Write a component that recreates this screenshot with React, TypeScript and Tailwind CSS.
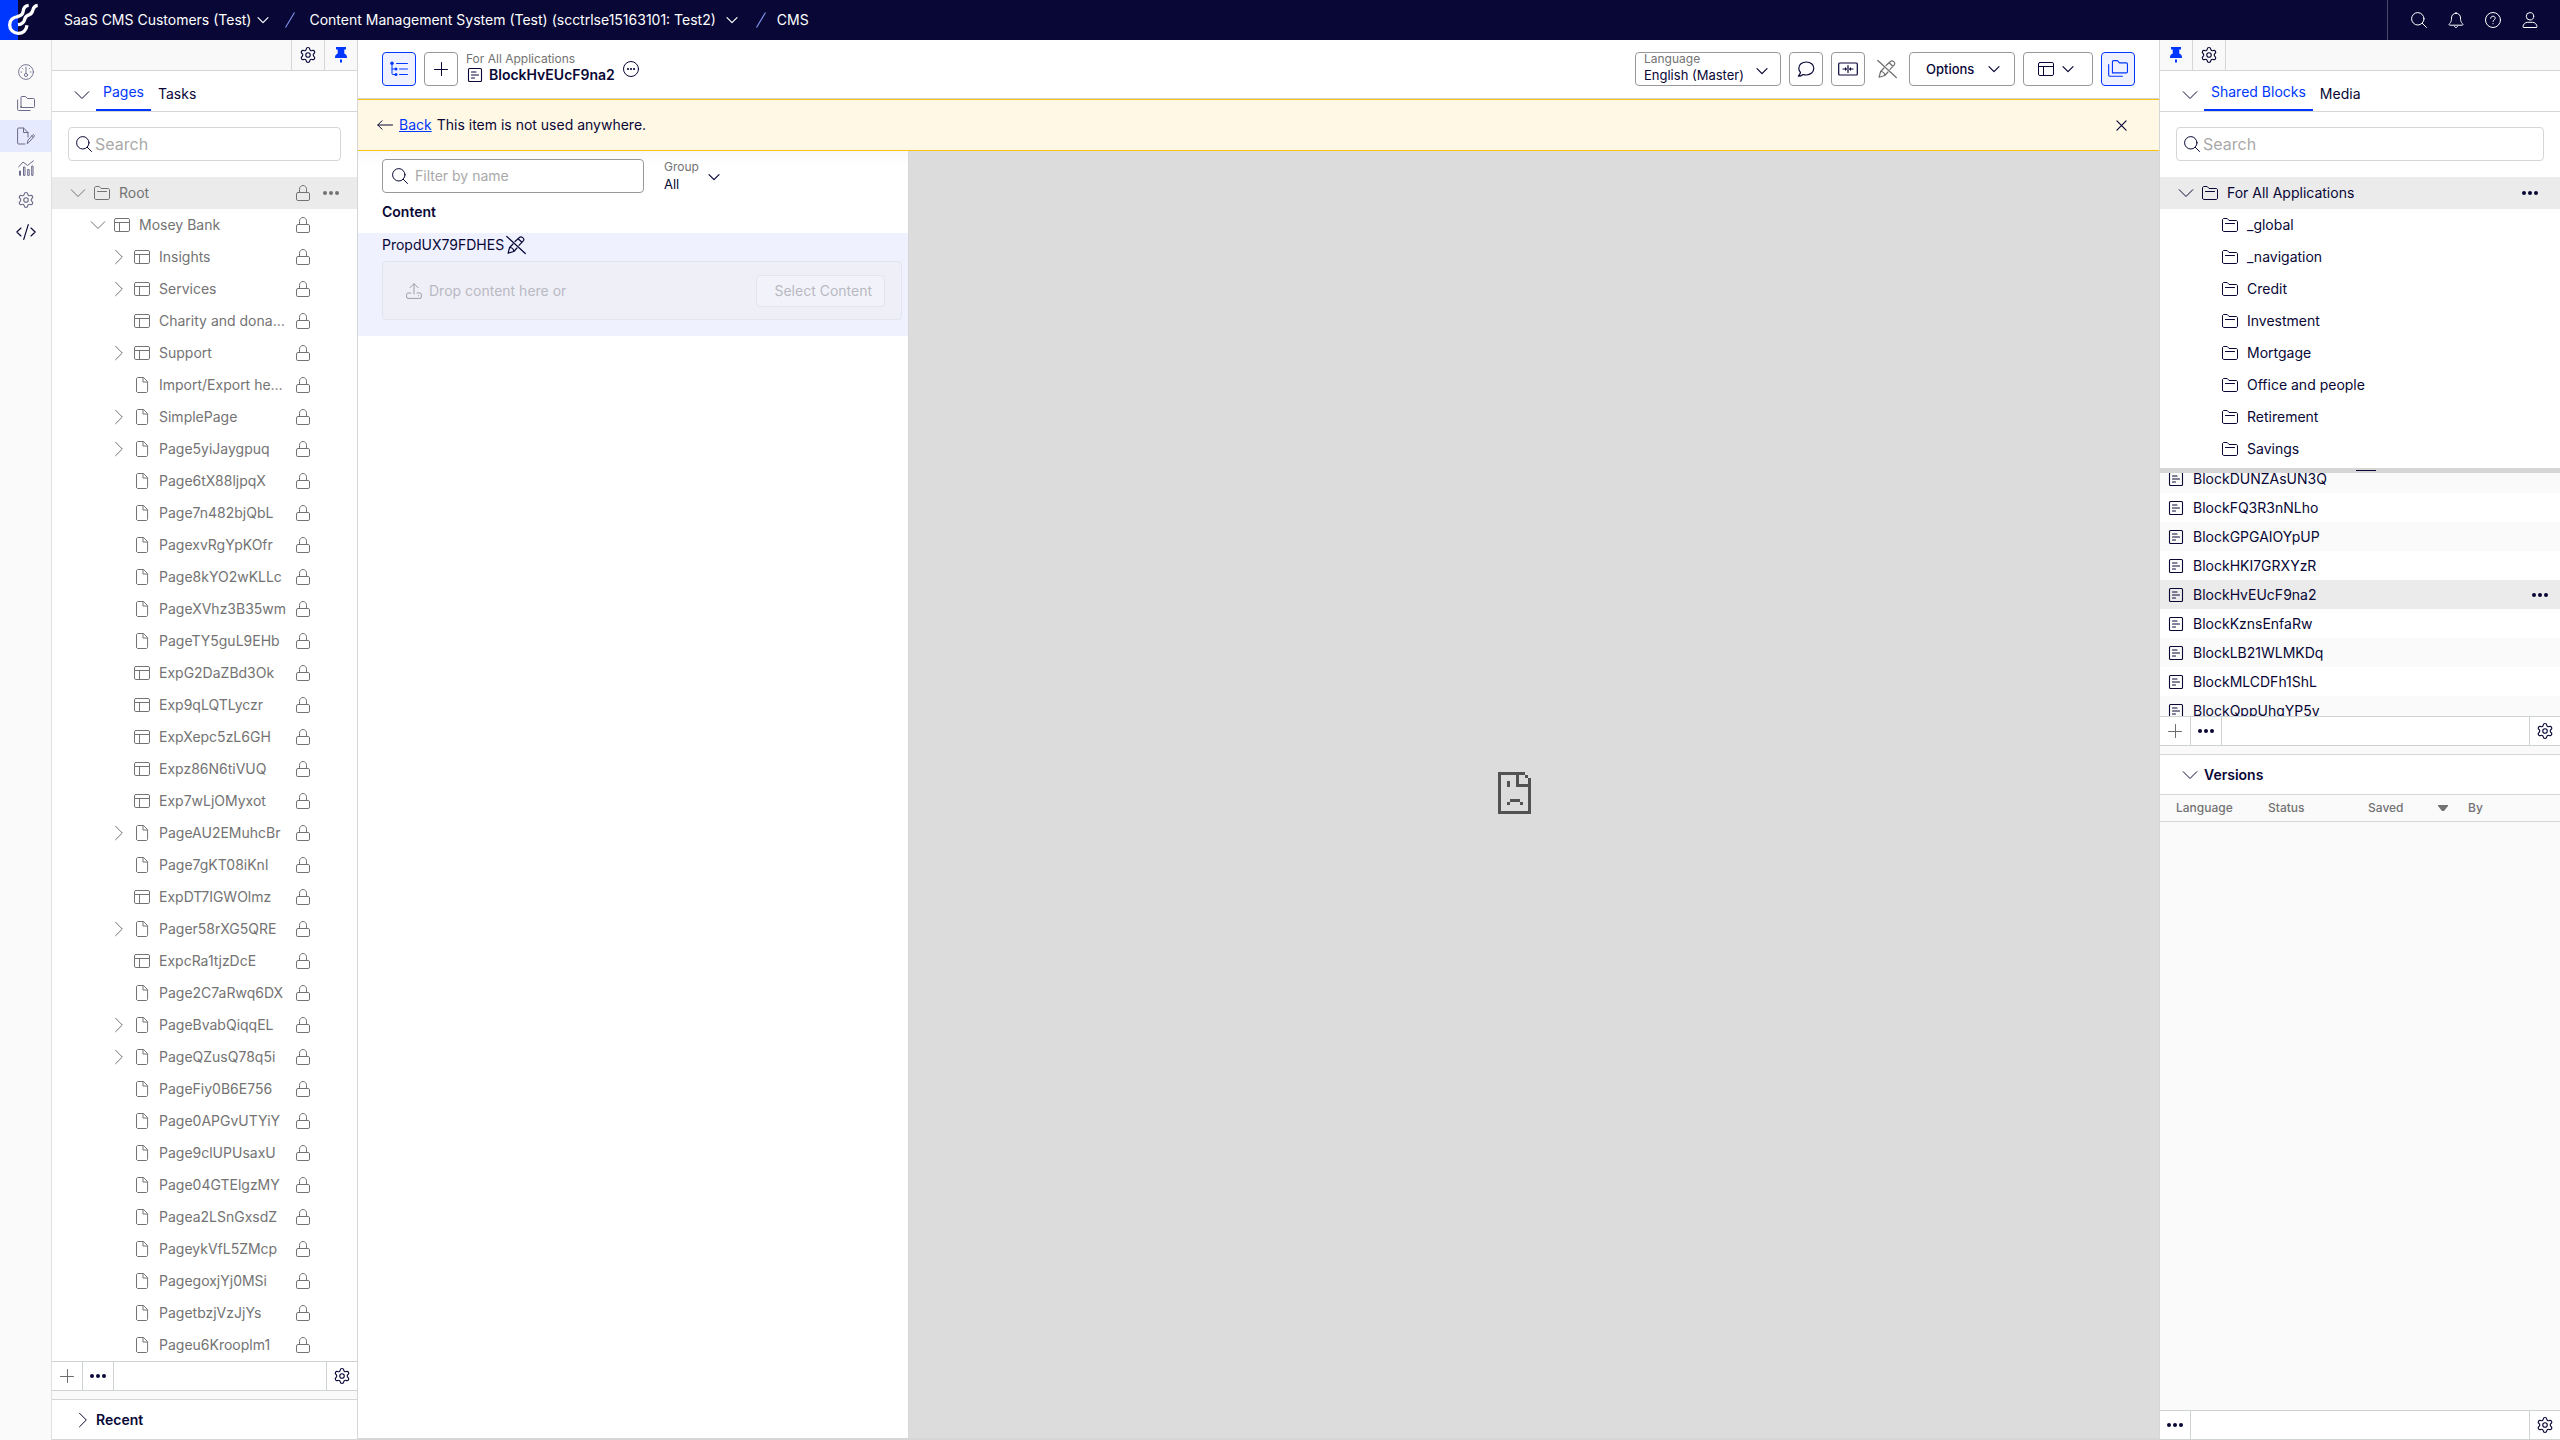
import { useState } from "react";
import type { ReactNode } from "react";
import { Settings } from "lucide-react";

/* ---------- icons ---------- */

type IconProps = { className?: string };

function Svg({ className = "size-4", box = 16, width = 1, children }: IconProps & { box?: number; width?: number; children: ReactNode }) {
  return (
    <svg
      viewBox={`0 0 ${box} ${box}`}
      className={`shrink-0 ${className}`}
      fill="none"
      stroke="currentColor"
      strokeWidth={width}
      strokeLinecap="round"
      strokeLinejoin="round"
      aria-hidden="true"
    >
      {children}
    </svg>
  );
}

const ChevronDown = ({ className = "size-4" }: IconProps) => (
  <Svg className={className}>
    <path d="M1.200 4.700 8 11.500 14.800 4.700" />
  </Svg>
);
const ChevronRight = ({ className = "size-4" }: IconProps) => (
  <Svg className={className}>
    <path d="M5.500 1.200 12.300 8 5.500 14.800" />
  </Svg>
);
const SmallChevron = ({ className = "size-3" }: IconProps) => (
  <Svg className={className} box={12} width={1.2}>
    <path d="M1 3.6 6 8.6 11 3.6" />
  </Svg>
);
const FolderIcon = ({ className }: IconProps) => (
  <Svg className={className}>
    <path d="M.5 13V3c0-.8.6-1.500 1.500-1.500h3.200L7 3.500h7c.9 0 1.500.6 1.500 1.400V13c0 .9-.6 1.500-1.500 1.500H2c-.9 0-1.500-.6-1.500-1.500ZM3.500 6.500h9" />
  </Svg>
);
const PageLayoutIcon = ({ className }: IconProps) => (
  <Svg className={className}>
    <rect x=".5" y="1.5" width="15" height="13" rx="1.4" />
    <path d="M.5 5.5h15M5.5 5.5v9" />
  </Svg>
);
const FileIcon = ({ className }: IconProps) => (
  <Svg className={className}>
    <path d="M2.5 14V2c0-.8.6-1.5 1.5-1.5h5.600l4 4.200V14c0 .9-.6 1.5-1.5 1.5H4c-.9 0-1.5-.6-1.5-1.5ZM9 .8V5h4.300" />
  </Svg>
);
const LockIcon = ({ className }: IconProps) => (
  <Svg className={className}>
    <rect x="1.5" y="7.5" width="13" height="8" rx="1.4" />
    <path d="M4.5 7.3V4.2C4.5 2 6 .5 8 .5s3.500 1.500 3.500 3.700v3.100" />
  </Svg>
);
const DotsIcon = ({ className }: IconProps) => (
  <Svg className={className}>
    <g fill="currentColor" stroke="none">
      <circle cx="2" cy="8" r="2" />
      <circle cx="8" cy="8" r="2" />
      <circle cx="14" cy="8" r="2" />
    </g>
  </Svg>
);
const SearchIcon = ({ className }: IconProps) => (
  <Svg className={className}>
    <circle cx="6.800" cy="6.800" r="6.200" />
    <path d="m11.300 11.300 4.200 4.200" />
  </Svg>
);
const BlockIcon = ({ className }: IconProps) => (
  <Svg className={className} width={1.1}>
    <rect x="1.500" y="1.500" width="13" height="13" rx="1" />
    <path d="M4.500 5h4.500M4.500 8h7M4.500 11h3" />
  </Svg>
);
const PlusIcon = ({ className }: IconProps) => (
  <Svg className={className}>
    <path d="M1.500 8.500h13M8.500 1.500v13" />
  </Svg>
);
const PinIcon = ({ className }: IconProps) => (
  <Svg className={className}>
    <path
      d="M3 0h10v2.500h-1.700v4c1.700.8 2.700 2 2.700 3.500v1H2v-1c0-1.500 1-2.700 2.700-3.500v-4H3ZM7 12.500h2V15l-1 1-1-1Z"
      fill="currentColor"
      stroke="none"
    />
  </Svg>
);
const GearIcon = ({ className = "size-[18px]" }: IconProps) => <Settings className={`shrink-0 ${className}`} strokeWidth={1.5} aria-hidden="true" />;

const GaugeIcon = ({ className }: IconProps) => (
  <Svg className={className} width={0.9}>
    <circle cx="8" cy="8" r="7.400" />
    <circle cx="8" cy="11" r="1.600" />
    <path d="M8 3.200v6M3 8h.8M12.200 8h.8M4.500 4.500l.5.5M11.500 4.500l-.5.5" />
  </Svg>
);
const FoldersIcon = ({ className = "size-[18px]" }: IconProps) => (
  <Svg className={className} box={18}>
    <path d="M4 12.500v-10c0-.6.4-1 1-1h3.500l1.800 2H16.500c.6 0 1 .4 1 1v7c0 .6-.4 1-1 1H5c-.6 0-1-.4-1-1Z" />
    <path d="M.6 5v9.500c0 .6.4 1 1 1H13" />
  </Svg>
);
const FilePenIcon = ({ className }: IconProps) => (
  <Svg className={className} box={18}>
    <path d="M11 10V5.500L6.500 1H1.500C1 1 .6 1.400.6 2v14c0 .6.4 1 .9 1H8" />
    <path d="M6.500 1v4.500H11M10.300 16.300l.8-3.300 4.800-5.300c.5-.5 2 .8 1.500 1.400l-4.900 5.600ZM14.600 8.900l1.600 1.500" />
  </Svg>
);
const ChartIcon = ({ className }: IconProps) => (
  <Svg className={className}>
    <path d="M.6 7 5 2l4.500 3.500L15.400.8M1.500 15v-4h1v4ZM5.500 15V7h1.500v8ZM9.700 15V9.500h1.500V15ZM13.700 15V6h1.300v9Z" />
  </Svg>
);
const CodeIcon = ({ className }: IconProps) => (
  <Svg className={className} box={20} width={1.1}>
    <path d="M5 6 .8 10 5 14M15 6l4.200 4L15 14M12.300 2.500l-4.600 15" />
  </Svg>
);
const BellIcon = ({ className }: IconProps) => (
  <Svg className={className}>
    <path d="M8 .5v1M8 1.300c-3 0-4.500 2.200-4.500 4.700 0 4-1.200 5-2.300 6-.4.500 0 1.200.6 1.200h12.400c.6 0 1-.7.6-1.200-1.100-1-2.300-2-2.300-6C12.500 3.500 11 1.300 8 1.300ZM6.500 14.500c.2.700.8 1 1.500 1s1.300-.3 1.500-1" />
  </Svg>
);
const HelpIcon = ({ className }: IconProps) => (
  <Svg className={className}>
    <circle cx="8" cy="8" r="7.500" />
    <path d="M5.700 6.300c0-1.300 1-2.100 2.300-2.100s2.300.8 2.300 2c0 1.700-2.300 1.600-2.300 3.300M8 11.600v.2" />
  </Svg>
);
const UserIcon = ({ className }: IconProps) => (
  <Svg className={className}>
    <circle cx="8" cy="4.300" r="3.700" />
    <path d="M1.500 15.500c-.3 0-.5-.2-.5-.6C1 12.500 3 10.300 5.500 10.300h5c2.500 0 4.500 2.200 4.500 4.600 0 .4-.2.6-.5.6Z" />
  </Svg>
);
const TreeIcon = ({ className }: IconProps) => (
  <Svg className={className} box={18}>
    <path d="M6.500 3.500h11M9.500 9h8M9.500 14.500h8M2 4.500V13.500c0 .6.400 1 1 1h2.500M2 9h3.500" />
    <g fill="currentColor" stroke="none">
      <circle cx="2" cy="3.300" r="1.700" />
      <circle cx="6" cy="9" r="1.500" />
      <circle cx="6" cy="14.500" r="1.500" />
    </g>
  </Svg>
);
const MoreCircleIcon = ({ className }: IconProps) => (
  <Svg className={className}>
    <circle cx="8" cy="8" r="7.500" />
    <g fill="currentColor" stroke="none">
      <circle cx="5" cy="8" r="1.100" />
      <circle cx="8" cy="8" r="1.100" />
      <circle cx="11" cy="8" r="1.100" />
    </g>
  </Svg>
);
const CommentIcon = ({ className }: IconProps) => (
  <Svg className={className} box={18} width={1.2}>
    <path d="M9.300 2C5 2 1.800 4.700 1.800 8.300c0 1.600.7 3 1.700 4.100-.3 1.600-1.200 2.900-2.200 3.800 1.900 0 3.700-.7 4.800-1.700 1 .3 2 .5 3.200.5 4.300 0 7.500-3 7.500-6.700S13.600 2 9.300 2Z" />
  </Svg>
);
const CompareIcon = ({ className }: IconProps) => (
  <Svg className={className} box={20} width={1.2}>
    <rect x=".700" y="4" width="18.600" height="12" rx="1" />
    <path d="M10 6.500v7M5 10h3M12 10h3" />
    <path d="M7 8l2 2-2 2ZM13 8l-2 2 2 2Z" fill="currentColor" stroke="none" />
  </Svg>
);
const NoEditIcon = ({ className }: IconProps) => (
  <Svg className={className} box={20} width={1.2}>
    <path d="M.8 1.500 19.300 18.500" />
    <path d="M9 6.500 13.700 2.300c1.500-1.500 5.200 1.300 3.800 3.300L13 10.300M12.300 4l3.700 3.300M7 9l-3.400 3.500-1.500 5.700 5.700-1.700L11 13M3.600 12.500c2.300 0 4 1.600 4.200 4" />
  </Svg>
);
const UploadIcon = ({ className }: IconProps) => (
  <Svg className={className}>
    <path d="M8 11V.8M4 4.700l4-4 4 4M5 10H2c-.8 0-1.400.6-1.400 1.400V14c0 .8.600 1.400 1.400 1.400h12c.8 0 1.400-.6 1.400-1.400v-2.600c0-.8-.600-1.400-1.400-1.400h-3M12.500 12.700h.2" />
  </Svg>
);
const ArrowLeftIcon = ({ className }: IconProps) => (
  <Svg className={className}>
    <path d="M15.500 8H.8M5 3.800.8 8 5 12.200" />
  </Svg>
);
const CloseIcon = ({ className }: IconProps) => (
  <Svg className={className} box={12} width={1.3}>
    <path d="m1 1 10 10M11 1 1 11" />
  </Svg>
);
const LogoIcon = ({ className }: IconProps) => (
  <svg viewBox="0 0 120 120" className={className} fill="none" stroke="white" strokeWidth="10" aria-hidden="true">
    <path d="M55 50C38 51 29 61 29 75c0 14 11 25 26 25 14 0 24-9 26-24" />
    <path d="M50 50c14-1 19-8 20-18 1-9 6-15 16-16" />
    <path d="M54 74c12-1 18-7 20-16 2-8 8-12 14-14 8-3 9-8 11-15 2-8 6-12 14-13" />
  </svg>
);
const SadPageIcon = ({ className }: IconProps) => (
  <svg viewBox="0 0 33 42" className={className} fill="#525252" shapeRendering="crispEdges" role="img" aria-label="Preview unavailable">
    <path d="M0 0h27v3H0zM0 0h3v42H0zM0 39h33v3H0zM30 6h3v36h-3zM27 3h3v3h-3zM18 0h3v15h-3zM18 12h15v3H18zM9 9h3v6H9zM12 27h10v3H12zM9 30h3v3H9zM22 30h3v3h-3z" />
  </svg>
);

/* ---------- data ---------- */

type Node = { name: string; kind: "folder" | "layout" | "file"; level?: number; open?: boolean; more?: boolean };

const f = (name: string, more = false): Node => ({ name, kind: "file", more });
const e = (name: string, more = false): Node => ({ name, kind: "layout", more });

const pages: Node[] = [
  { name: "Root", kind: "folder", level: 0, open: true },
  { name: "Mosey Bank", kind: "layout", level: 1, open: true },
  e("Insights", true),
  e("Services", true),
  e("Charity and dona…"),
  e("Support", true),
  f("Import/Export he…"),
  f("SimplePage", true),
  f("Page5yiJaygpuq", true),
  f("Page6tX88ljpqX"),
  f("Page7n482bjQbL"),
  f("PagexvRgYpKOfr"),
  f("Page8kYO2wKLLc"),
  f("PageXVhz3B35wm"),
  f("PageTY5guL9EHb"),
  e("ExpG2DaZBd3Ok"),
  e("Exp9qLQTLyczr"),
  e("ExpXepc5zL6GH"),
  e("Expz86N6tiVUQ"),
  e("Exp7wLjOMyxot"),
  f("PageAU2EMuhcBr", true),
  f("Page7gKT08iKnl"),
  e("ExpDT7IGWOlmz"),
  f("Pager58rXG5QRE", true),
  e("ExpcRa1tjzDcE"),
  f("Page2C7aRwq6DX"),
  f("PageBvabQiqqEL", true),
  f("PageQZusQ78q5i", true),
  f("PageFiy0B6E756"),
  f("Page0APGvUTYiY"),
  f("Page9clUPUsaxU"),
  f("Page04GTElgzMY"),
  f("Pagea2LSnGxsdZ"),
  f("PageykVfL5ZMcp"),
  f("PagegoxjYj0MSi"),
  f("PagetbzjVzJjYs"),
  f("Pageu6Krooplm1"),
];

const folders = ["_global", "_navigation", "Credit", "Investment", "Mortgage", "Office and people", "Retirement", "Savings"];

const blocks = [
  "BlockDUNZAsUN3Q",
  "BlockFQ3R3nNLho",
  "BlockGPGAIOYpUP",
  "BlockHKI7GRXYzR",
  "BlockHvEUcF9na2",
  "BlockKznsEnfaRw",
  "BlockLB21WLMKDq",
  "BlockMLCDFh1ShL",
  "BlockQppUhqYP5v",
];

/* ---------- shared parts ---------- */

const levelPadding = ["pl-[18px]", "pl-[38px]", "pl-[58px]"];

function IconButton({ label, active, children }: { label: string; active?: boolean; children: ReactNode }) {
  return (
    <button
      type="button"
      aria-label={label}
      className={`flex size-[34px] shrink-0 items-center justify-center rounded border ${
        active ? "border-[#0037ff] bg-[#eff1ff] text-[#0037ff]" : "border-[#989898] bg-white"
      }`}
    >
      {children}
    </button>
  );
}

function TabBar({ tabs }: { tabs: string[] }) {
  const [current, setCurrent] = useState(tabs[0]);
  return (
    <div className="flex h-[41px] shrink-0 items-stretch border-b border-[#d6d6d6] bg-white pl-[22px]">
      <button type="button" aria-label="Collapse" className="mt-2 mr-[6px] self-center">
        <ChevronDown />
      </button>
      <div role="tablist" className="flex">
        {tabs.map((tab) => (
          <button
            key={tab}
            type="button"
            role="tab"
            aria-selected={tab === current}
            onClick={() => setCurrent(tab)}
            className={
              tab === current
                ? "border-b-2 border-[#0037ff] px-[7px] pt-1 text-[#0037ff]"
                : "px-[7px] pt-[6px]"
            }
          >
            {tab}
          </button>
        ))}
      </div>
    </div>
  );
}

function SearchBox({ id }: { id: string }) {
  return (
    <div className="shrink-0 bg-white px-4 pt-[15px] pb-4">
      <div className="flex h-[34px] items-center rounded border border-[#d6d6d6] pl-[7px]">
        <label htmlFor={id} aria-label="Search">
          <SearchIcon />
        </label>
        <input id={id} type="search" placeholder="Search" className="ml-[3px] min-w-0 flex-1 bg-transparent text-base outline-none placeholder:text-[#a9a9a9]" />
      </div>
    </div>
  );
}

function FooterBar({ add }: { add?: boolean }) {
  return (
    <div className="flex h-[30px] shrink-0 items-stretch border-y border-[#cdd3d3] bg-white">
      {add && (
        <button type="button" aria-label="Add" className="flex w-[31px] items-center justify-center border-r border-[#cdd3d3] text-[#6d6d6d]">
          <PlusIcon className="size-4" />
        </button>
      )}
      <button type="button" aria-label="More options" className="flex w-[31px] items-center justify-center border-r border-[#cdd3d3]">
        <DotsIcon />
      </button>
      <button type="button" aria-label="Settings" className="ml-auto flex w-[31px] items-center justify-center border-l border-[#cdd3d3]">
        <GearIcon />
      </button>
    </div>
  );
}

/* ---------- regions ---------- */

function TopBar() {
  const slash = (
    <svg viewBox="0 0 10 16" className="h-4 w-[10px]" stroke="#7d90e8" strokeWidth="1.200" aria-hidden="true">
      <path d="M9.500.5.5 15.500" />
    </svg>
  );
  return (
    <header className="flex h-10 shrink-0 items-center bg-[#080736] text-white">
      <a href="#home" aria-label="Home" className="flex h-full w-10 shrink-0 bg-[linear-gradient(90deg,#0037ff_18px,transparent_18px)]">
        <LogoIcon className="size-10" />
      </a>
      <nav aria-label="Breadcrumb" className="ml-6 flex items-center">
        <button type="button" className="flex items-center gap-[6px]">
          SaaS CMS Customers (Test)
          <SmallChevron />
        </button>
        <span className="mr-[14px] ml-4">{slash}</span>
        <button type="button" className="flex items-center gap-[10px]">
          Content Management System (Test) (scctrlse15163101: Test2)
          <SmallChevron />
        </button>
        <span className="mr-[11px] ml-[18px]">{slash}</span>
        <a href="#cms">CMS</a>
      </nav>
      <div className="ml-auto flex h-full items-center gap-[21px] border-l border-[#4b4a6b] pr-[22px] pl-[23px]">
        <button type="button" aria-label="Search"><SearchIcon /></button>
        <button type="button" aria-label="Notifications"><BellIcon /></button>
        <button type="button" aria-label="Help"><HelpIcon /></button>
        <button type="button" aria-label="Account"><UserIcon /></button>
      </div>
    </header>
  );
}

function NavRail() {
  const items = [
    { label: "Dashboard", icon: <GaugeIcon /> },
    { label: "Assets", icon: <FoldersIcon /> },
    { label: "Edit", icon: <FilePenIcon className="size-[18px]" />, active: true },
    { label: "Reports", icon: <ChartIcon /> },
    { label: "Settings", icon: <GearIcon /> },
    { label: "Developer", icon: <CodeIcon className="size-5" />, dark: true },
  ];
  return (
    <nav aria-label="Main" className="w-[52px] shrink-0 border-r border-[#e0e0e0] bg-[#fafafa] pt-4">
      {items.map((it) => (
        <a
          key={it.label}
          href={`#${it.label.toLowerCase()}`}
          aria-label={it.label}
          className={`flex h-8 items-center justify-center ${it.active ? "bg-[#e6eaff]" : ""} ${it.dark ? "text-[#080736]" : "text-[#6b6a8a]"}`}
        >
          {it.icon}
        </a>
      ))}
    </nav>
  );
}

function PageRow({ node }: { node: Node }) {
  const level = node.level ?? 2;
  const root = level === 0;
  return (
    <li
      role="treeitem"
      aria-expanded={node.open ? true : node.more ? false : undefined}
      aria-selected={root}
      className={`flex h-8 items-center pr-[18px] ${levelPadding[level]} ${root ? "bg-[#ebebeb]" : ""}`}
    >
      <span className="mr-2 w-4 shrink-0">
        {node.open && <ChevronDown />}
        {node.more && <ChevronRight />}
      </span>
      {node.kind === "folder" && <FolderIcon />}
      {node.kind === "layout" && <PageLayoutIcon />}
      {node.kind === "file" && <FileIcon />}
      <span className="ml-[9px] min-w-0 flex-1 truncate">{node.name}</span>
      <LockIcon className="ml-[7px] size-4" />
      <span className="ml-3 w-4">
        {root && (
          <button type="button" aria-label="Root options" className="flex">
            <DotsIcon />
          </button>
        )}
      </span>
    </li>
  );
}

function LeftPanel() {
  return (
    <aside className="flex w-[306px] shrink-0 flex-col border-r border-[#d6d6d6] bg-white">
      <div className="flex h-[31px] shrink-0 items-stretch justify-end border-b border-[#d6d6d6] bg-[#f9f9f9]">
        <button type="button" aria-label="Settings" className="flex w-[33px] items-center justify-center border-l border-[#d6d6d6]">
          <GearIcon />
        </button>
        <button type="button" aria-label="Unpin" className="flex w-[33px] items-center justify-center border-l border-[#d6d6d6] text-[#0037ff]">
          <PinIcon />
        </button>
      </div>
      <TabBar tabs={["Pages", "Tasks"]} />
      <SearchBox id="page-search" />
      <ul role="tree" aria-label="Pages" className="min-h-0 flex-1 overflow-hidden text-[#737373]">
        {pages.map((p) => (
          <PageRow key={p.name} node={p} />
        ))}
      </ul>
      <FooterBar add />
      <div className="h-2 shrink-0 bg-[#fafafa]" />
      <button type="button" className="flex h-[41px] shrink-0 items-center gap-[6px] border-y border-[#d6d6d6] pl-[22px] font-semibold">
        <ChevronRight />
        Recent
      </button>
    </aside>
  );
}

function EditorToolbar() {
  return (
    <div className="flex h-[59px] shrink-0 items-center gap-2 border-b border-[#d6d6d6] bg-white px-6">
      <IconButton label="Toggle tree" active>
        <TreeIcon className="size-[18px]" />
      </IconButton>
      <IconButton label="Add">
        <PlusIcon />
      </IconButton>
      <div className="flex flex-col pb-1">
        <span className="text-xs text-[#737373]">For All Applications</span>
        <h1 className="flex items-center gap-[6px] font-semibold leading-4">
          <BlockIcon className="ml-[1px] size-4" />
          BlockHvEUcF9na2
        </h1>
      </div>
      <button type="button" aria-label="More actions">
        <MoreCircleIcon />
      </button>

      <div className="relative ml-auto h-[34px] w-[146px] rounded border border-[#989898]">
        <label htmlFor="language" className="absolute top-0 left-2 text-xs leading-3 text-[#737373]">
          Language
        </label>
        <select id="language" className="h-full w-full appearance-none bg-transparent pt-3 pr-8 pl-2 text-[13px] leading-4 outline-none">
          <option>English (Master)</option>
        </select>
        <SmallChevron className="pointer-events-none absolute top-3 right-3 size-3" />
      </div>
      <IconButton label="Comments">
        <CommentIcon className="size-[18px]" />
      </IconButton>
      <IconButton label="Compare">
        <CompareIcon className="size-5" />
      </IconButton>
      <span className="flex w-7 justify-center text-[#6d6d6d]">
        <NoEditIcon className="size-5" />
      </span>
      <button type="button" className="flex h-[34px] w-[106px] items-center justify-between rounded border border-[#989898] pr-[14px] pl-4 text-[13px] font-medium">
        Options
        <SmallChevron />
      </button>
      <button type="button" aria-label="View" className="flex h-[34px] items-center gap-2 rounded border border-[#989898] pr-[18px] pl-[14px]">
        <PageLayoutIcon />
        <SmallChevron />
      </button>
      <IconButton label="Toggle assets" active>
        <FoldersIcon className="size-5" />
      </IconButton>
    </div>
  );
}

function Properties() {
  return (
    <section className="w-[551px] shrink-0 border-r border-[#d6d6d6] bg-white bg-[linear-gradient(#f8f8f8,transparent_14px)] pt-2">
      <div className="flex h-[34px] items-center px-6">
        <div className="flex h-[34px] w-[262px] items-center gap-[7px] rounded border border-[#989898] bg-white pl-[9px]">
          <label htmlFor="filter" aria-label="Filter">
            <SearchIcon />
          </label>
          <input id="filter" type="text" placeholder="Filter by name" className="min-w-0 flex-1 bg-transparent outline-none placeholder:text-[#a9a9a9]" />
        </div>
        <div className="relative ml-5 flex w-[60px] flex-col">
          <label htmlFor="group" className="text-xs leading-4 text-[#737373]">
            Group
          </label>
          <select id="group" className="appearance-none bg-transparent text-[13px] leading-[18px] outline-none">
            <option>All</option>
          </select>
          <SmallChevron className="pointer-events-none absolute top-3 right-1 size-3" />
        </div>
      </div>
      <h2 className="px-6 pt-[9px] pb-[11px] font-semibold">Content</h2>
      <div className="bg-[#eff1ff] pt-[2px] pr-[6px] pb-4 pl-6">
        <div className="flex items-center gap-[2px]">
          PropdUX79FDHES
          <NoEditIcon className="size-5" />
        </div>
        <div className="mt-[6px] flex h-[59px] items-center rounded border border-[#e3e4ef] bg-[#efeff8] pr-4 pl-[23px] text-[#b9b9c2]">
          <UploadIcon className="size-4 text-[#9d9da6]" />
          <span className="ml-[7px]">Drop content here or</span>
          <button type="button" disabled className="ml-auto h-8 rounded border border-[#e3e4ee] bg-[#f2f3fa] pr-3 pl-[17px]">
            Select Content
          </button>
        </div>
      </div>
    </section>
  );
}

function Editor() {
  return (
    <main className="flex min-w-0 flex-1 flex-col border-b-2 border-[#d6d6d6]">
      <EditorToolbar />
      <div className="flex h-[52px] shrink-0 items-center border-y border-[#fbc110] bg-[#fff8e5] pr-8 pl-[19px]">
        <ArrowLeftIcon />
        <a href="#back" className="ml-[6px] text-[#0037ff] underline">
          Back
        </a>
        <p className="ml-[5px]">This item is not used anywhere.</p>
        <button type="button" aria-label="Close" className="ml-auto">
          <CloseIcon className="size-[11px]" />
        </button>
      </div>
      <div className="flex min-h-0 flex-1">
        <Properties />
        <div className="flex flex-1 items-center justify-center bg-[#dcdcdc] pr-[39px] pb-1">
          <SadPageIcon className="h-[42px] w-[33px]" />
        </div>
      </div>
    </main>
  );
}

function RightPanel() {
  return (
    <aside className="flex w-[401px] shrink-0 flex-col border-l border-[#d6d6d6] bg-white">
      <div className="flex h-[31px] shrink-0 items-stretch border-b border-[#d6d6d6] bg-[#f9f9f9]">
        <button type="button" aria-label="Unpin" className="flex w-[33px] items-center justify-center border-r border-[#d6d6d6] text-[#0037ff]">
          <PinIcon />
        </button>
        <button type="button" aria-label="Settings" className="flex w-[33px] items-center justify-center border-r border-[#d6d6d6]">
          <GearIcon />
        </button>
      </div>
      <TabBar tabs={["Shared Blocks", "Media"]} />
      <SearchBox id="block-search" />
      <ul role="tree" aria-label="Shared blocks" className="pb-[3px]">
        <li role="treeitem" aria-expanded="true" aria-selected="true" className="flex h-8 items-center bg-[#ebebeb] pr-[22px] pl-[18px]">
          <ChevronDown />
          <FolderIcon className="ml-2 size-4" />
          <span className="ml-[9px] flex-1">For All Applications</span>
          <button type="button" aria-label="Folder options">
            <DotsIcon />
          </button>
        </li>
        {folders.map((name) => (
          <li key={name} role="treeitem" aria-selected="false" className="flex h-8 items-center pl-[62px]">
            <FolderIcon />
            <span className="ml-[9px]">{name}</span>
          </li>
        ))}
      </ul>
      <div role="separator" className="flex h-[5px] shrink-0 items-center justify-center bg-[#d6d6d6] pl-3">
        <span className="h-px w-5 bg-[#080736]" />
      </div>
      <div className="h-[243px] shrink-0 overflow-hidden">
        <ul className="-mt-[9px]">
          {blocks.map((name, i) => {
            const selected = name === "BlockHvEUcF9na2";
            return (
              <li key={name} className={`flex h-[29px] items-center pr-3 pl-2 ${selected ? "bg-[#ebebeb]" : i % 2 === 0 ? "bg-[#fafafa]" : ""}`}>
                <BlockIcon />
                <span className="ml-[9px] flex-1">{name}</span>
                {selected && (
                  <button type="button" aria-label="Block options">
                    <DotsIcon />
                  </button>
                )}
              </li>
            );
          })}
        </ul>
      </div>
      <FooterBar add />
      <div className="h-2 shrink-0 bg-[#fafafa]" />
      <button type="button" className="flex h-[41px] shrink-0 items-center gap-[6px] border-y border-[#d6d6d6] pl-[22px] font-semibold">
        <ChevronDown />
        Versions
      </button>
      <div className="flex-1 bg-[#fafafa]">
        <table className="w-full table-fixed text-left text-xs text-[#737373]">
          <thead>
            <tr className="h-[26px] border-b border-[#d6d6d6]">
              <th scope="col" className="w-[108px] pl-4 font-medium">Language</th>
              <th scope="col" className="w-[100px] font-medium">Status</th>
              <th scope="col" aria-sort="descending" className="w-[100px] font-medium">
                <span className="flex items-center justify-between pr-5">
                  Saved
                  <svg viewBox="0 0 10 6" className="h-[6px] w-[10px]" fill="currentColor" aria-hidden="true">
                    <path d="M0 0h10v1L6 6H4L0 1Z" />
                  </svg>
                </span>
              </th>
              <th scope="col" className="font-medium">By</th>
            </tr>
          </thead>
          <tbody />
        </table>
      </div>
      <FooterBar />
    </aside>
  );
}

export default function App() {
  return (
    <div className="flex h-screen flex-col overflow-hidden font-['Inter',sans-serif] text-sm text-[#080736]">
      <TopBar />
      <div className="flex min-h-0 flex-1">
        <NavRail />
        <LeftPanel />
        <Editor />
        <RightPanel />
      </div>
    </div>
  );
}
